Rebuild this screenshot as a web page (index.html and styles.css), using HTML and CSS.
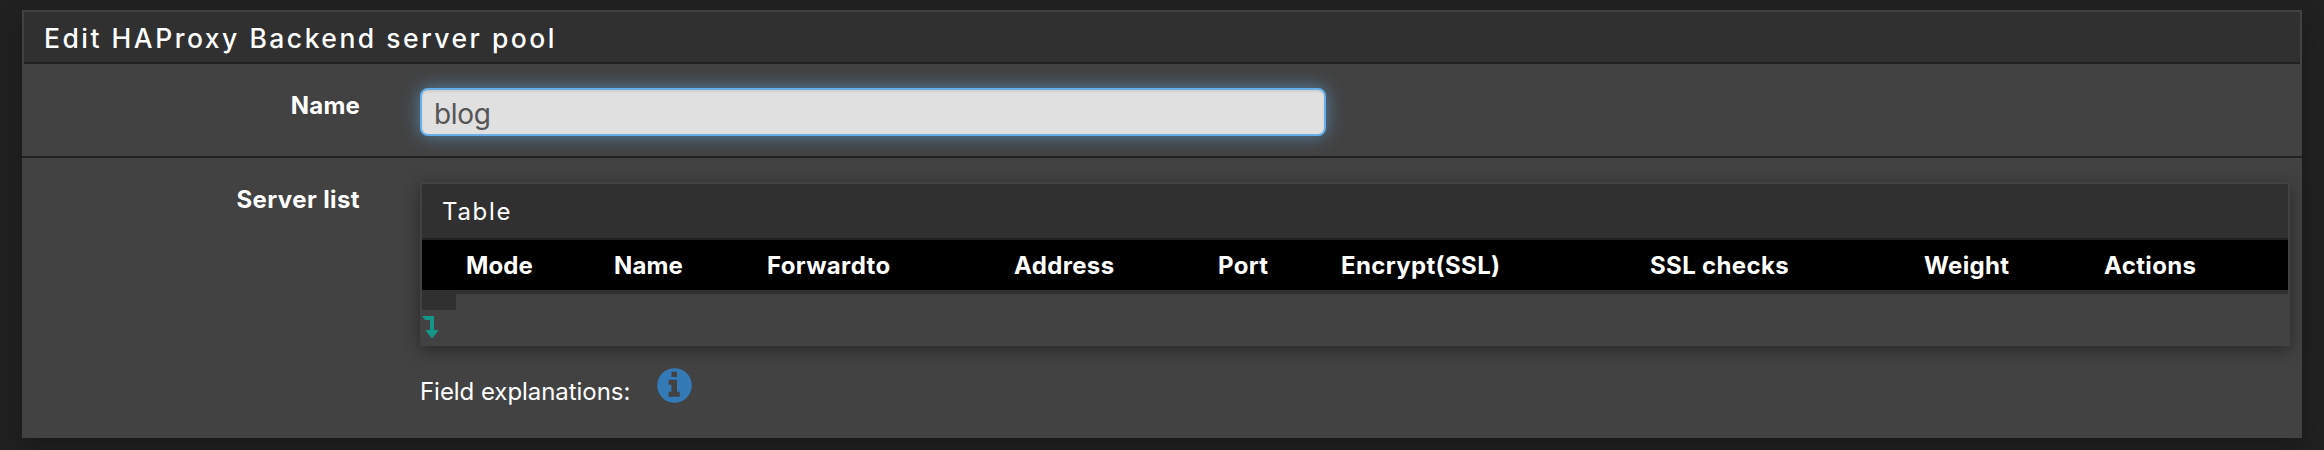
FILE: index.html
```html
<!DOCTYPE html>
<html lang="en">
<head>
<meta charset="utf-8">
<title>HAProxy Backend</title>
<link rel="stylesheet" href="styles.css">
</head>
<body>
<section class="panel">
  <h2 class="panel-title">Edit HAProxy Backend server pool</h2>
  <div class="form-row name-row">
    <label class="label label-name" for="name">Name</label>
    <input class="text-input" id="name" type="text" value="blog">
  </div>
  <div class="form-row list-row">
    <div class="label label-list">Server list</div>
    <div class="content">
      <div class="table-panel">
        <h3 class="table-title">Table</h3>
        <div class="table-head">
          <span></span><span class="c-mode">Mode</span><span class="c-name">Name</span><span class="c-forward">Forwardto</span><span class="c-address">Address</span><span class="c-port">Port</span><span class="c-encrypt">Encrypt(SSL)</span><span class="c-checks">SSL checks</span><span class="c-weight">Weight</span><span class="c-actions">Actions</span>
        </div>
        <div class="table-stub"></div>
        <svg class="add-icon" width="16" height="22" viewBox="0 0 16 22"><path d="M0 0H12V14H16V15L10.5 22H9.5L4 15V14H8V4H3Z"/></svg>
      </div>
      <div class="explain">
        <span class="explain-text">Field explanations:</span>
        <svg class="info-icon" width="35" height="35" viewBox="0 0 35 35"><circle class="disc" cx="17.5" cy="17.5" r="17.3"/><path class="mark" d="M14.4 3.8h5.6v5.2h-5.6zM11.6 11.8h8.4v12h2.7v5H11.6v-5h2.8v-7h-2.8z"/></svg>
      </div>
    </div>
  </div>
</section>
</body>
</html>
```
FILE: styles.css
```css
* { box-sizing: border-box; }
body {
  margin: 0;
  height: 450px;
  padding: 10px 22px 0;
  overflow: hidden;
  background: #212121;
  color: #fff;
  font: 24px/34px Inter, "Liberation Sans", sans-serif;
}
.panel {
  height: 428px;
  border: 2px solid #424242;
  background: #424242;
  box-shadow: 0 12px 24px rgba(0, 0, 0, .25);
}
.panel-title {
  margin: 0;
  height: 52px;
  padding: 9px 20px 0;
  border-bottom: 2px solid #212121;
  background: #303030;
  font-size: 26.5px;
  font-weight: 550;
  letter-spacing: 2.5px;
}
.form-row {
  display: grid;
  grid-template-columns: 336px 1fr;
  column-gap: 60px;
  margin: 0 -2px;
  padding-left: 2px;
}
.name-row { height: 94px; padding-top: 24px; border-bottom: 2px solid #212121; }
.list-row { padding: 24px 12px 0 2px; }
.label { padding-top: 1px; font-weight: 700; text-align: right; white-space: nowrap; }
.label-name { letter-spacing: .2px; }
.label-list { letter-spacing: .4px; }
.text-input {
  width: 906px;
  height: 48px;
  padding: 4px 12px 0;
  border: 2px solid #66afe9;
  border-radius: 8px;
  outline: 0;
  background: #e0e0e0;
  color: #555;
  font: 28px Inter, "Liberation Sans", sans-serif;
  letter-spacing: -.3px;
  box-shadow: inset 0 2px 2px rgba(0, 0, 0, .075), 0 0 18px rgba(102, 175, 233, .6);
}
.table-panel {
  height: 164px;
  border: 2px solid #424242;
  background: #424242;
  box-shadow: 0 4px 16px rgba(0, 0, 0, .4);
}
.table-title {
  margin: 0;
  height: 56px;
  padding: 11px 20px;
  border-bottom: 2px solid #212121;
  background: #303030;
  font-size: 24px;
  font-weight: 400;
  letter-spacing: 1.7px;
}
.table-head {
  display: grid;
  grid-template-columns: 44px 148px 153px 247px 204px 123px 309px 274px 180px 1fr;
  height: 54px;
  padding-top: 9px;
  border-bottom: 4px solid #303030;
  background: #000;
  font-weight: 700;
  letter-spacing: .35px;
  white-space: nowrap;
}
.c-mode, .c-name { letter-spacing: .1px; }
.table-stub { width: 34px; height: 16px; background: #303030; }
.add-icon { display: block; margin-top: 6px; fill: #159588; }
.explain { display: flex; align-items: flex-start; gap: 27px; padding-top: 22px; }
.explain-text { padding-top: 7px; letter-spacing: -.05px; white-space: nowrap; }
.disc { fill: #337ab7; }
.mark { fill: #424242; }
```
